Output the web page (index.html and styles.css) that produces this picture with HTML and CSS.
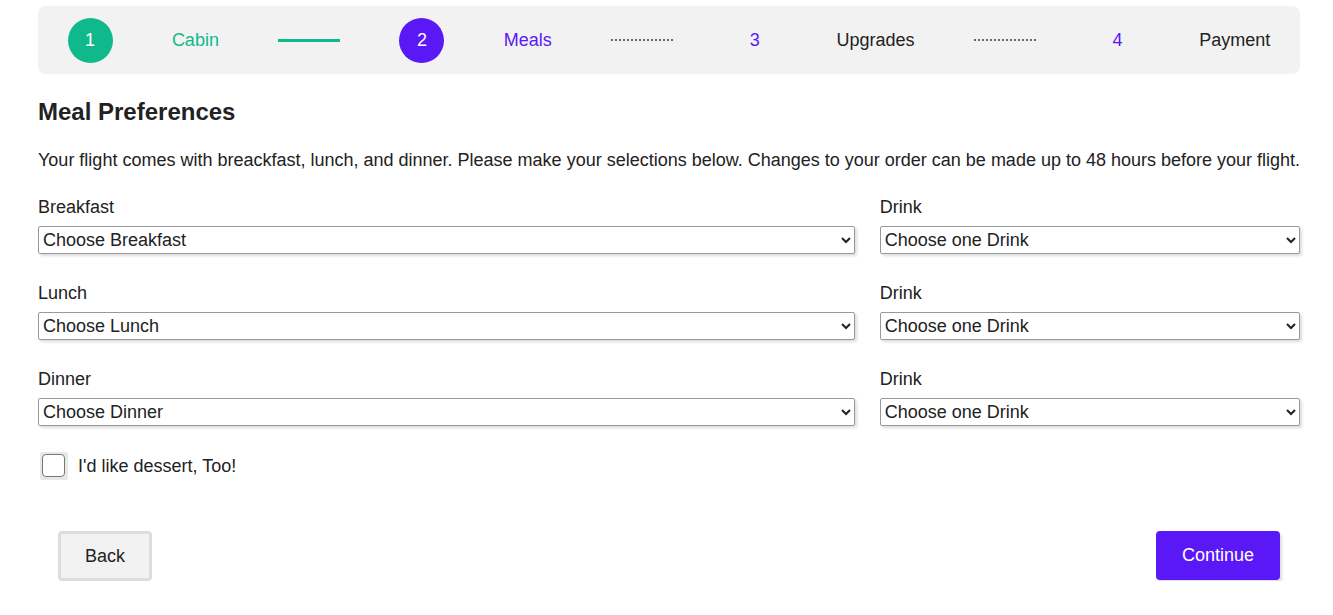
FILE: index.html
```html
<!DOCTYPE html>
<html>
<head>
<meta charset="utf-8">
<link rel="stylesheet" href="styles.css">
</head>
<body>
<div class="page">
  <nav class="stepper">
    <span class="circle done">1</span>
    <span class="step-label done-text">Cabin</span>
    <span class="line solid"></span>
    <span class="circle active">2</span>
    <span class="step-label active-text">Meals</span>
    <span class="line dotted"></span>
    <span class="num">3</span>
    <span class="step-label">Upgrades</span>
    <span class="line dotted"></span>
    <span class="num">4</span>
    <span class="step-label">Payment</span>
  </nav>

  <h1 class="title">Meal Preferences</h1>
  <p class="intro">Your flight comes with breackfast, lunch, and dinner. Please make your selections below. Changes to your order can be made up to 48 hours before your flight.</p>

  <div class="grid">
    <div class="field">
      <label>Breakfast</label>
      <select><option>Choose Breakfast</option></select>
    </div>
    <div class="field">
      <label>Drink</label>
      <select><option>Choose one Drink</option></select>
    </div>
    <div class="field">
      <label>Lunch</label>
      <select><option>Choose Lunch</option></select>
    </div>
    <div class="field">
      <label>Drink</label>
      <select><option>Choose one Drink</option></select>
    </div>
    <div class="field">
      <label>Dinner</label>
      <select><option>Choose Dinner</option></select>
    </div>
    <div class="field">
      <label>Drink</label>
      <select><option>Choose one Drink</option></select>
    </div>
  </div>

  <label class="check">
    <span class="box"></span>
    <span>I'd like dessert, Too!</span>
  </label>

  <div class="actions">
    <button class="btn back">Back</button>
    <button class="btn continue">Continue</button>
  </div>
</div>
</body>
</html>
```

FILE: styles.css
```css
* { box-sizing: border-box; }
body {
  margin: 0;
  font-family: "Liberation Sans", Arial, sans-serif;
  color: #222;
  background: #fff;
}
.page {
  padding: 6px 33px 0 38px;
}
.stepper {
  display: flex;
  align-items: center;
  justify-content: space-around;
  background: #f2f2f2;
  border-radius: 8px;
  height: 68px;
  font-size: 18px;
}
.circle {
  width: 45px;
  height: 45px;
  border-radius: 50%;
  display: flex;
  align-items: center;
  justify-content: center;
  color: #fff;
}
.circle.done { background: #10b98b; }
.circle.active { background: #5a18f7; }
.num {
  width: 45px;
  text-align: center;
  color: #5a18f7;
}
.step-label { color: #222; }
.step-label.done-text { color: #10b98b; }
.step-label.active-text { color: #5a18f7; }
.line { width: 62px; }
.line.solid { border-top: 3px solid #10b98b; }
.line.dotted { border-top: 2px dotted #666; }

.title {
  font-size: 24px;
  font-weight: bold;
  margin: 24px 0 0;
  line-height: 28px;
}
.intro {
  font-size: 18px;
  margin: 23px 0 0;
  line-height: 22px;
  white-space: nowrap;
}
.grid {
  display: grid;
  grid-template-columns: 816fr 420fr;
  column-gap: 25px;
  row-gap: 28px;
  margin-top: 25px;
}
.field {
  display: flex;
  flex-direction: column;
}
.field label {
  font-size: 18px;
  line-height: 22px;
  margin-bottom: 8px;
}
.field select {
  font-family: "Liberation Sans", Arial, sans-serif;
  font-size: 18px;
  height: 28px;
  color: #222;
  background: #fff;
  border: 1px solid #999;
  border-radius: 2px;
  box-shadow: 2px 2px 3px #ddd;
  padding: 0;
}
.check {
  display: flex;
  align-items: center;
  gap: 10px;
  margin-top: 26px;
  font-size: 18px;
  padding-left: 2px;
}
.box {
  width: 28px;
  height: 28px;
  background: #e8e8e8;
  padding: 2px;
  border-radius: 2px;
  display: block;
  position: relative;
}
.box::after {
  content: "";
  position: absolute;
  inset: 2px 3px 3px 2px;
  background: #fff;
  border: 1px solid #777;
  border-radius: 4px;
}
.actions {
  display: flex;
  justify-content: space-between;
  margin-top: 51px;
  padding: 0 20px 0 20px;
}
.btn {
  font-family: "Liberation Sans", Arial, sans-serif;
  font-size: 18px;
  border-radius: 4px;
  height: 50px;
  cursor: pointer;
}
.back {
  width: 94px;
  background: #f2f2f2;
  color: #222;
  border: 3px solid #ddd;
}
.continue {
  width: 124px;
  height: 49px;
  background: #5a18f7;
  color: #fff;
  border: none;
  box-shadow: 2px 3px 3px #ddd;
}
```
